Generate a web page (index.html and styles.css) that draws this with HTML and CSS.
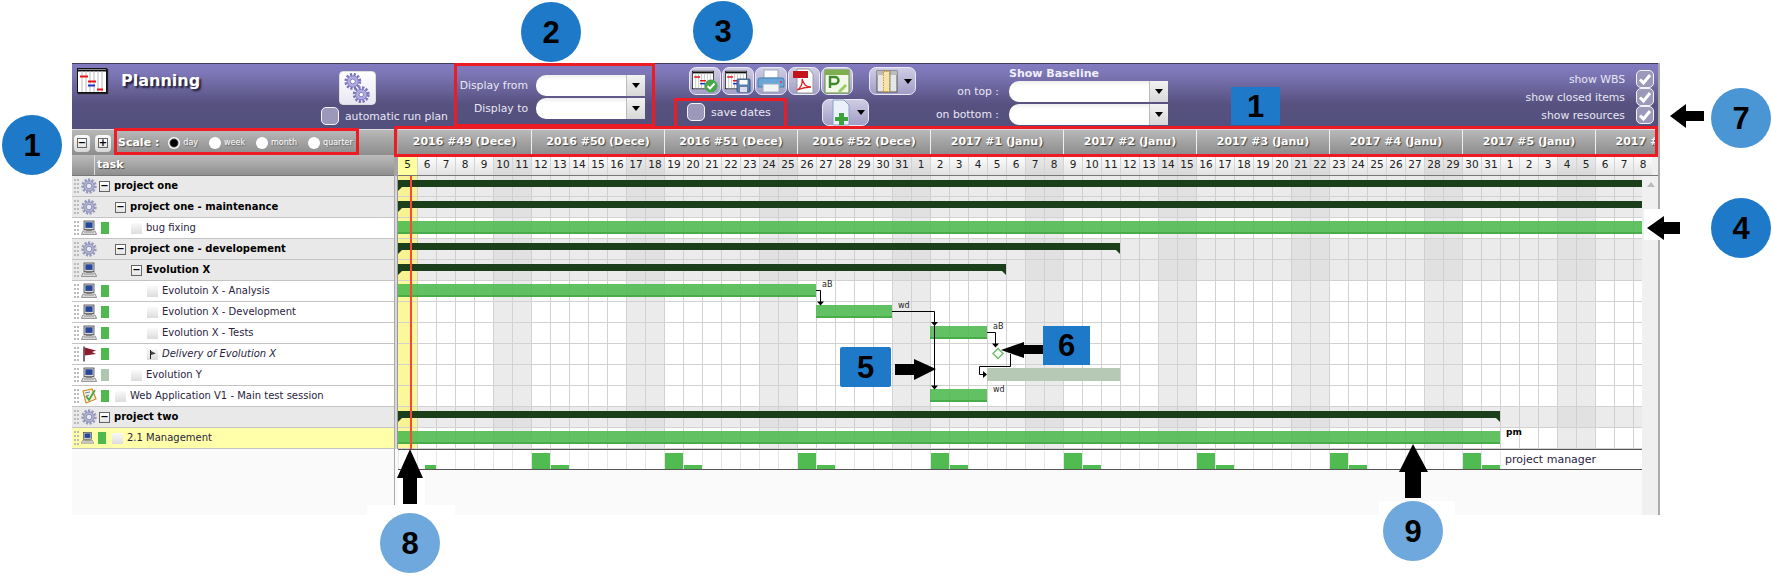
FILE: index.html
```html
<!DOCTYPE html>
<html lang="en">
<head>
<meta charset="utf-8">
<title>Planning</title>
<link rel="stylesheet" href="styles.css">
</head>
<body>
<svg class="defs" width="0" height="0" aria-hidden="true">
  <symbol id="gear" viewBox="0 0 16 16">
    <circle cx="8" cy="8" r="6.4" fill="none" stroke="#9a9dc0" stroke-width="2.6" stroke-dasharray="2.2 1.35"/>
    <circle cx="8" cy="8" r="5.2" fill="#b4b6d6" stroke="#7d80a4" stroke-width=".7"/>
    <circle cx="8" cy="8" r="2.8" fill="#e8e9f4" stroke="#7a7da2" stroke-width=".8"/>
  </symbol>
  <symbol id="pc" viewBox="0 0 16 16">
    <rect x="3" y="1" width="10" height="8.5" fill="#d8d8d8" stroke="#444" stroke-width=".8"/>
    <rect x="4.4" y="2.3" width="7.2" height="5.6" fill="#26479b"/>
    <rect x="5" y="9.5" width="6" height="1.4" fill="#888"/>
    <path d="M2 11h12l1.6 3.4H.4z" fill="#e6e6e6" stroke="#666" stroke-width=".7"/>
    <path d="M3 12.6h10" stroke="#999" stroke-width=".7"/>
  </symbol>
  <symbol id="flag" viewBox="0 0 16 16">
    <path d="M3 .5V15.5" stroke="#111" stroke-width="1.2"/>
    <path d="M3.6 1.5 15 4.5 11 6 15 8 3.6 9.5z" fill="#8e1b2c"/>
  </symbol>
  <symbol id="test" viewBox="0 0 16 16">
    <path d="M2 3 11 1l4 10-10 4z" fill="#f6f1df" stroke="#d98a2b" stroke-width="1.2"/>
    <path d="M4 5l5-1M5 8l3-.7" stroke="#3c6cb4" stroke-width=".8"/>
    <path d="M5 8l3 4 6-10" fill="none" stroke="#45a54a" stroke-width="1.8"/>
  </symbol>
  <symbol id="gantt" viewBox="0 0 30 25">
    <rect x=".5" y=".5" width="29" height="24" fill="#fff" stroke="#111"/>
    <path d="M1 2.5h28" stroke="#111" stroke-width="2"/>
    <path d="M5 3v21M9 3v21M13 3v21M17 3v21M21 3v21M25 3v21" stroke="#bbb"/>
    <path d="M3 8.5h8M11 13.500h8M20 21.500h6" stroke="#e8141c" stroke-width="2"/>
    <path d="M11 17.500h7" stroke="#2233cc" stroke-width="2"/>
  </symbol>
  <symbol id="tick" viewBox="0 0 16 16">
    <path d="M3 8.500l3.500 3.500L13 4" fill="none" stroke="#fff" stroke-width="3"/>
  </symbol>
</svg>

<div class="stage">
  <div class="planner">
    <header class="toolbar">
      <div class="tb-logo"><svg class="logo"><use href="#gantt"/></svg></div>
      <div class="tb-title">Planning</div>
      <div class="tb-run">
        <button class="gearbtn" type="button" aria-label="run plan">
          <svg viewBox="3 1 28 32" width="27" height="30">
            <circle cx="12" cy="10" r="7.500" fill="none" stroke="#7a73bd" stroke-width="3" stroke-dasharray="2.400 1.600"/>
            <circle cx="12" cy="10" r="6" fill="#b3aee0" stroke="#7a73bd"/>
            <circle cx="12" cy="10" r="2.600" fill="#fff" stroke="#7a73bd"/>
            <circle cx="21" cy="24" r="7.500" fill="none" stroke="#7a73bd" stroke-width="3" stroke-dasharray="2.400 1.600"/>
            <ellipse cx="21" cy="24" rx="6" ry="5.500" fill="#b3aee0" stroke="#7a73bd"/>
            <circle cx="21" cy="24" r="2.400" fill="#fff" stroke="#7a73bd"/>
          </svg>
        </button>
        <label class="check-row"><span class="check"></span><span>automatic run plan</span></label>
      </div>
      <div class="tb-display">
        <span class="tb-label">Display from</span>
        <span class="combo"><span class="combo-field"></span><span class="combo-arrow"></span></span>
        <span class="tb-label">Display to</span>
        <span class="combo"><span class="combo-field"></span><span class="combo-arrow"></span></span>
      </div>
      <div class="tb-actions">
        <div class="act-row">
          <button class="ibtn" type="button" aria-label="refresh"><svg viewBox="0 0 30 26" width="30" height="26"><use href="#gantt" width="22" height="20" x="2" y="2"/><circle cx="21" cy="18" r="6.500" fill="#46a846"/><path d="M17.500 18l2.500 2.500 4.500-5" fill="none" stroke="#fff" stroke-width="2"/></svg></button>
          <button class="ibtn" type="button" aria-label="save"><svg viewBox="0 0 30 26" width="30" height="26"><use href="#gantt" width="22" height="20" x="2" y="2"/><rect x="14" y="11" width="13" height="13" rx="1" fill="#5d7fb0" stroke="#3a5a88"/><rect x="16.500" y="12" width="8" height="4.500" fill="#fff"/><rect x="17" y="19" width="7" height="5" fill="#dde"/></svg></button>
          <button class="ibtn" type="button" aria-label="print"><svg viewBox="0 0 30 26" width="30" height="26"><rect x="8" y="2" width="14" height="8" fill="#fff" stroke="#9ab"/><path d="M4 10h22q2 0 2 2v7H2v-7q0-2 2-2z" fill="#6aa6d8" stroke="#4a7fae"/><rect x="7" y="16" width="16" height="8" fill="#f4f4f4" stroke="#9ab"/><circle cx="25" cy="14" r="1" fill="#e33"/></svg></button>
          <button class="ibtn" type="button" aria-label="pdf"><svg viewBox="0 0 30 26" width="30" height="26"><path d="M8 1h12l4 5v19H8z" fill="#fff" stroke="#999"/><rect x="4" y="3" width="15" height="7" fill="#c4141b"/><path d="M8 22c4-2 6-7 5-11 2 6 4 8 9 8-5 0-9 1-14 3z" fill="none" stroke="#d22" stroke-width="1.300"/></svg></button>
          <button class="ibtn" type="button" aria-label="project"><svg viewBox="0 0 30 26" width="30" height="26"><rect x="3" y="2" width="24" height="23" fill="#f2f7e8" stroke="#5f8f3a"/><rect x="3" y="2" width="24" height="5" fill="#7fae4e"/><path d="M8 20V9h5a3 3 0 0 1 0 7H8" fill="none" stroke="#3f8a2c" stroke-width="2.400"/><path d="M17 24l7-7" stroke="#9c6" stroke-width="3"/></svg></button>
          <button class="ibtn ibtn-menu ibtn-cols" type="button" aria-label="columns"><svg viewBox="0 0 26 26" width="26" height="26"><rect x="3" y="3" width="20" height="21" fill="#e6e6e6" stroke="#555"/><rect x="3" y="3" width="20" height="4" fill="#bbb"/><rect x="9.500" y="3.500" width="6" height="20" fill="#f5e3a8" stroke="#e0941c" stroke-dasharray="1.500 1"/><path d="M16 3v21" stroke="#888"/></svg><span class="caret"></span></button>
        </div>
        <div class="act-row act-row2">
          <label class="check-row save"><span class="check"></span><span>save dates</span></label>
          <button class="ibtn ibtn-menu ibtn-new" type="button" aria-label="new"><svg viewBox="0 0 26 27" width="26" height="27"><path d="M6 1h11l5 5v20H6z" fill="#eaf1fb" stroke="#8aa0c0"/><path d="M12 15h5v4h4v4h-4v4h-5v-4H8v-4h4z" fill="#3ca33c" transform="translate(0 -1)"/></svg><span class="caret"></span></button>
        </div>
      </div>
      <div class="tb-baseline">
        <div class="base-title">Show Baseline</div>
        <div class="base-grid">
          <span class="tb-label">on top :</span>
          <span class="combo"><span class="combo-field"></span><span class="combo-arrow"></span></span>
          <span class="tb-label">on bottom :</span>
          <span class="combo"><span class="combo-field"></span><span class="combo-arrow"></span></span>
        </div>
      </div>
      <div class="tb-options">
        <div class="opt"><span>show WBS</span><span class="check"><svg><use href="#tick"/></svg></span></div>
        <div class="opt"><span>show closed items</span><span class="check"><svg><use href="#tick"/></svg></span></div>
        <div class="opt"><span>show resources</span><span class="check"><svg><use href="#tick"/></svg></span></div>
      </div>
    </header>

    <div class="head">
      <div class="head-left">
        <div class="scale-row">
          <button class="mini" type="button"><span class="tree-box">−</span></button>
          <button class="mini mini-plus" type="button"><span class="tree-box">+</span></button>
          <span class="scale-label">Scale :</span>
          <label class="radio on"><span class="dot"></span>day</label>
          <label class="radio"><span class="dot"></span>week</label>
          <label class="radio"><span class="dot"></span>month</label>
          <label class="radio"><span class="dot"></span>quarter</label>
        </div>
        <div class="task-row"><span class="task-title">task</span></div>
      </div>
      <div class="head-split"></div>
      <div class="head-right">
        <div class="weeks">
          <span class="week">2016 #49 (Dece)</span><span class="week">2016 #50 (Dece)</span><span class="week">2016 #51 (Dece)</span><span class="week">2016 #52 (Dece)</span><span class="week">2017 #1 (Janu)</span><span class="week">2017 #2 (Janu)</span><span class="week">2017 #3 (Janu)</span><span class="week">2017 #4 (Janu)</span><span class="week">2017 #5 (Janu)</span><span class="week">2017 #6 (Febr)</span>
        </div>
        <div class="days">
          <span>5</span><span>6</span><span>7</span><span>8</span><span>9</span><span>10</span><span>11</span><span>12</span><span>13</span><span>14</span><span>15</span><span>16</span><span>17</span><span>18</span><span>19</span><span>20</span><span>21</span><span>22</span><span>23</span><span>24</span><span>25</span><span>26</span><span>27</span><span>28</span><span>29</span><span>30</span><span>31</span><span>1</span><span>2</span><span>3</span><span>4</span><span>5</span><span>6</span><span>7</span><span>8</span><span>9</span><span>10</span><span>11</span><span>12</span><span>13</span><span>14</span><span>15</span><span>16</span><span>17</span><span>18</span><span>19</span><span>20</span><span>21</span><span>22</span><span>23</span><span>24</span><span>25</span><span>26</span><span>27</span><span>28</span><span>29</span><span>30</span><span>31</span><span>1</span><span>2</span><span>3</span><span>4</span><span>5</span><span>6</span><span>7</span><span>8</span>
        </div>
      </div>
    </div>

    <div class="body">
      <div class="tasks">
        <div class="trow sum"><i class="grip"></i><svg class="ico"><use href="#gear"/></svg><span class="tree-box l0">−</span><span class="name">project one</span></div>
        <div class="trow sum"><i class="grip"></i><svg class="ico"><use href="#gear"/></svg><span class="tree-box l1">−</span><span class="name">project one - maintenance</span></div>
        <div class="trow"><i class="grip"></i><svg class="ico"><use href="#pc"/></svg><i class="sq"></i><span class="leaf l2"></span><span class="name">bug fixing</span></div>
        <div class="trow sum"><i class="grip"></i><svg class="ico"><use href="#gear"/></svg><span class="tree-box l1">−</span><span class="name">project one - developement</span></div>
        <div class="trow sum"><i class="grip"></i><svg class="ico"><use href="#pc"/></svg><span class="tree-box l2">−</span><span class="name">Evolution X</span></div>
        <div class="trow"><i class="grip"></i><svg class="ico"><use href="#pc"/></svg><i class="sq"></i><span class="leaf l3"></span><span class="name">Evolutoin X - Analysis</span></div>
        <div class="trow"><i class="grip"></i><svg class="ico"><use href="#pc"/></svg><i class="sq"></i><span class="leaf l3"></span><span class="name">Evolution X - Development</span></div>
        <div class="trow"><i class="grip"></i><svg class="ico"><use href="#pc"/></svg><i class="sq"></i><span class="leaf l3"></span><span class="name">Evolution X - Tests</span></div>
        <div class="trow mile"><i class="grip"></i><svg class="ico"><use href="#flag"/></svg><i class="sq"></i><span class="leaf l3 leaf-flag"><svg viewBox="0 0 11 11"><path d="M3.500 1v9" stroke="#222"/><path d="M4 2l5 2.500L4 6z" fill="#444"/></svg></span><span class="name">Delivery of Evolution X</span></div>
        <div class="trow"><i class="grip"></i><svg class="ico"><use href="#pc"/></svg><i class="sq sq-pale"></i><span class="leaf l2"></span><span class="name">Evolution Y</span></div>
        <div class="trow"><i class="grip"></i><svg class="ico"><use href="#test"/></svg><i class="sq"></i><span class="leaf l1"></span><span class="name">Web Application V1 - Main test session</span></div>
        <div class="trow sum"><i class="grip"></i><svg class="ico"><use href="#gear"/></svg><span class="tree-box l0">−</span><span class="name">project two</span></div>
        <div class="trow sel"><i class="grip"></i><svg class="ico"><use href="#pc"/></svg><i class="sq"></i><span class="leaf"></span><span class="name">2.1 Management</span></div>
      </div>
      <div class="splitter"><i></i></div>
      <div class="chart">
        <div class="grows">
          <div class="grow gsum"><b class="sumbar" style="left:0;width:1300px"></b></div>
          <div class="grow gsum"><b class="sumbar" style="left:0;width:1300px"></b></div>
          <div class="grow"><b class="bar" style="left:0;width:1300px"></b></div>
          <div class="grow gsum"><b class="sumbar" style="left:0;width:722px"></b></div>
          <div class="grow gsum"><b class="sumbar" style="left:0;width:608px"></b></div>
          <div class="grow"><b class="bar" style="left:0;width:418px"></b><span class="lbl" style="left:424px">aB</span></div>
          <div class="grow"><b class="bar" style="left:418px;width:76px"></b><span class="lbl" style="left:500px">wd</span></div>
          <div class="grow"><b class="bar" style="left:532px;width:57px"></b><span class="lbl" style="left:595px">aB</span></div>
          <div class="grow"></div>
          <div class="grow"><b class="bar bar-pale" style="left:589px;width:133px"></b></div>
          <div class="grow"><b class="bar" style="left:532px;width:57px"></b><span class="lbl" style="left:595px">wd</span></div>
          <div class="grow gsum"><b class="sumbar" style="left:0;width:1102px"></b></div>
          <div class="grow"><b class="bar" style="left:0;width:1102px"></b><span class="lbl lbl-b" style="left:1108px">pm</span></div>
          <svg class="links" width="1244" height="273" aria-hidden="true">
            <g fill="none" stroke="#000">
              <path d="M418 114.500h4.500V126"/>
              <path d="M494 135.500h42.500V210"/>
              <path d="M589 156.500h8.500V168"/>
              <path d="M612.500 178v12.500h-31v8h4"/>
            </g>
            <g fill="#000">
              <path d="M419 125.500h7l-3.500 4z"/>
              <path d="M533 146h7l-3.500 4z"/>
              <path d="M533 209.500h7l-3.500 4z"/>
              <path d="M594 167.500h7l-3.500 4z"/>
              <path d="M585 195l4 3.500-4 3.500z"/>
            </g>
            <path d="M600 172.500l5 5-5 5-5-5z" fill="#fff" stroke="#6cc06c" stroke-width="1.500"/>
          </svg>
          <i class="nowline"></i>
        </div>
        <div class="resource">
          <b class="rb rb-s" style="left:27px;width:11px"></b>
          <b class="rb rb-t" style="left:134px"></b><b class="rb rb-s" style="left:153px"></b>
          <b class="rb rb-t" style="left:267px"></b><b class="rb rb-s" style="left:286px"></b>
          <b class="rb rb-t" style="left:400px"></b><b class="rb rb-s" style="left:419px"></b>
          <b class="rb rb-t" style="left:533px"></b><b class="rb rb-s" style="left:552px"></b>
          <b class="rb rb-t" style="left:666px"></b><b class="rb rb-s" style="left:685px"></b>
          <b class="rb rb-t" style="left:799px"></b><b class="rb rb-s" style="left:818px"></b>
          <b class="rb rb-t" style="left:932px"></b><b class="rb rb-s" style="left:951px"></b>
          <b class="rb rb-t" style="left:1065px"></b><b class="rb rb-s" style="left:1084px"></b>
          <span class="res-name">project manager</span>
        </div>
      </div>
      <div class="scrollbar"><i></i></div>
    </div>
  </div>

  <div class="patch p-4"></div>
  <div class="patch p-8a"></div>
  <div class="patch p-8b"></div>
  <div class="patch p-9"></div>

  <div class="redbox r-scale"></div>
  <div class="redbox r-display"></div>
  <div class="redbox r-save"></div>
  <div class="redbox r-weeks"></div>

  <svg class="arrows" width="1772" height="579" aria-hidden="true">
    <polygon points="895,364 914,364 914,359 936,369 914,380 914,375 895,375"/>
    <polygon points="1001,350 1024,342 1024,345 1045,345 1045,354 1024,354 1024,358"/>
    <polygon points="1670,116 1686,104 1686,111 1704,111 1704,121 1686,121 1686,128"/>
    <polygon points="1647,228 1664,216 1664,222 1680,222 1680,234 1664,234 1664,240"/>
    <polygon points="410,449 423,478 417,478 417,504 403,504 403,478 397,478"/>
    <polygon points="1413,444 1428,472 1421,472 1421,498 1405,498 1405,472 1399,472"/>
  </svg>

  <div class="num n-1">1</div>
  <div class="num n-2">2</div>
  <div class="num n-3">3</div>
  <div class="num n-4">4</div>
  <div class="num n-7 mid">7</div>
  <div class="num n-8 pale">8</div>
  <div class="num n-9 pale">9</div>
  <div class="tag t-1">1</div>
  <div class="tag t-5">5</div>
  <div class="tag t-6">6</div>
</div>
</body>
</html>
```
FILE: styles.css
```css
* { box-sizing: border-box; }
html, body { margin: 0; padding: 0; background: #fff; }
body { font-family: "DejaVu Sans", sans-serif; }
.defs { position: absolute; }
button { padding: 0; font: inherit; cursor: default; }

.stage { position: relative; width: 1772px; height: 579px; overflow: hidden; padding: 63px 0 0 72px; }
.planner { width: 1588px; height: 452px; display: flex; flex-direction: column; border-right: 2px solid #aaa; }

/* toolbar */
.toolbar {
  height: 66px; flex: none; border-top: 1px solid #3f3c60;
  background: linear-gradient(#837bc0 0, #7d76b6 15%, #56517f 62%, #54507e 100%);
  display: grid; grid-template-columns: 49px 200px 133px 235px 241px 239px 489px;
  color: #e9e7f4; font-size: 10.8px;
}
.tb-logo { padding: 4px 0 0 5px; }
.logo { display: block; width: 30px; height: 25px; box-shadow: 1px 1px 1px #222; }
.tb-title { font-size: 16px; font-weight: bold; color: #fff; padding-top: 7px; line-height: 20px; text-shadow: 2px 2px 2px #1c1a33; }
.tb-run { padding-top: 7px; }
.gearbtn {
  display: flex; align-items: center; justify-content: center; width: 37px; height: 34px; margin: 0 0 2px 18px;
  background: linear-gradient(#fff, #e9e8f2); border: 1px solid #ddd; border-radius: 4px;
}
.check-row { display: flex; align-items: center; gap: 6px; }
.check {
  display: block; width: 18px; height: 18px; flex: none;
  background: #9c98ba; border: 1px solid #f2f2f8; border-radius: 5px;
}
.check svg { display: block; width: 16px; height: 16px; }
.tb-label { text-align: right; }
.tb-display { display: grid; grid-template-columns: 74px 109px; column-gap: 8px; row-gap: 2px; padding-top: 11px; align-content: start; align-items: center; }
.combo { display: flex; height: 21px; width: 100%; }
.combo-field { flex: 1; background: linear-gradient(#eee, #fff 25%, #fff); border-radius: 10px 0 0 10px; }
.combo-arrow { position: relative; width: 19px; background: linear-gradient(#f2f2f2, #d8d8d8); border-left: 1px solid #bbb; }
.combo-arrow::after { content: ""; position: absolute; left: 5px; top: 8px; border: 4px solid transparent; border-top: 5px solid #000; border-bottom: 0; }

.tb-actions { padding-top: 3px; }
.act-row { display: flex; gap: 1px; }
.act-row2 { margin-top: 4px; }
.ibtn {
  display: flex; align-items: center; justify-content: center; width: 32px; height: 28px; flex: none;
  background: linear-gradient(#cfcce4, #a29dc6); border: 1px solid #ece9f6; border-radius: 7px;
}
.ibtn-menu { width: 47px; gap: 4px; }
.ibtn-cols { margin-left: 15px; }
.ibtn-new { height: 27px; }
.caret { border: 4px solid transparent; border-top: 5px solid #000; border-bottom: 0; }
.save { width: 132px; margin-left: -2px; margin-right: 2px; gap: 6px; font-size: 11px; padding-bottom: 1px; }
.tb-baseline { padding-top: 3px; }
.base-title { font-size: 11px; font-weight: bold; line-height: 14px; padding-left: 79px; color: #f0effa; }
.base-grid { display: grid; grid-template-columns: 69px 159px; column-gap: 10px; row-gap: 2px; align-items: center; }
.tb-options { display: flex; flex-direction: column; align-items: flex-end; padding: 6px 4px 0 0; }
.opt { display: flex; align-items: center; gap: 11px; height: 18px; }

/* header band */
.head { display: flex; height: 47px; flex: none; }
.head-left { width: 322px; border-top: 1px solid #ddd; background: #999; }
.head-split { width: 4px; background: #a5a5a5; }
.head-right { flex: 1; min-width: 0; overflow: hidden; background: #f0f0f0; }
.scale-row {
  display: flex; align-items: center; height: 25px; padding-left: 2px;
  background: linear-gradient(#b8b8b8, #8c8c8c); color: #fff;
}
.mini { display: flex; align-items: center; justify-content: center; width: 16px; height: 17px; margin-top: 1px; background: linear-gradient(#fafafa, #d8d8d8); border: 0; border-radius: 4px; }
.mini-plus { margin-left: 5px; }
.mini .tree-box { width: 10px; height: 10px; }
.tree-box {
  display: flex; align-items: center; justify-content: center; width: 11px; height: 11px; flex: none;
  border: 1px solid #666; background: linear-gradient(#fff, #e4e4e4); font-size: 10px; line-height: 1; color: #000; font-weight: bold;
}
.scale-label { font-size: 11px; font-weight: bold; margin: 0 9px 0 7px; text-shadow: 1px 1px 1px #555; }
.radio { display: flex; align-items: center; gap: 3px; font-size: 8px; margin-right: 11px; text-shadow: 1px 1px 1px #666; }
.dot { display: block; width: 12px; height: 12px; border-radius: 50%; background: #fff; }
.on .dot { background: radial-gradient(circle, #000 0 3px, #444 4px, #fff 5px); }
.task-row { height: 21px; background: linear-gradient(#bbb, #8f8f8f); border-bottom: 1px solid #777; padding-left: 22px; }
.task-title { display: block; height: 20px; line-height: 20px; padding-left: 2px; border-left: 1px solid #ddd; font-size: 11px; font-weight: bold; color: #fff; text-shadow: 1px 1px 1px #444; }

.weeks { display: flex; height: 26px; border-top: 1px solid #ddd; }
.week {
  flex: none; width: 133px; line-height: 24px; text-align: center; white-space: nowrap; font-size: 11px; font-weight: bold; color: #fff;
  background: linear-gradient(#b8b8b8, #8c8c8c); text-shadow: 1px 1px 1px #444;
}
.week + .week { border-left: 1px solid #f0f0f0; }
.days { display: flex; height: 21px; border-bottom: 1px solid #777; }
.days span {
  flex: none; width: 19px; text-align: center; line-height: 19px; font-size: 10.500px; color: #222;
  background: linear-gradient(#fff, #e2e2e2); border-left: 1px solid #d4d4d4; white-space: nowrap;
}
.days span:nth-child(7n+6), .days span:nth-child(7n+7) { background: linear-gradient(#ececec, #d8d8d8); }
.days span:first-child { background: #ffffa0; border-left: 0; }

/* body */
.body { flex: 1; display: flex; min-height: 0; background: #fafafa; }
.tasks { width: 322px; flex: none; }
.trow { display: flex; align-items: center; height: 21px; background: #fff; border-bottom: 1px solid #c4c4c4; font-size: 10px; color: #2a2440; white-space: nowrap; }
.trow.sum { background: #e9e9e9; font-weight: bold; color: #000; }
.trow.mile .name { font-style: italic; }
.trow.sel { background: #ffffaa; }
.grip { display: block; width: 6px; height: 15px; margin-left: 2px; flex: none; background: radial-gradient(circle at 1px 1px, #bbb 1px, transparent 1.200px) 0 0 / 3px 4px; }
.ico { display: block; width: 16px; height: 16px; margin-left: 1px; flex: none; }
.sq { display: block; width: 8px; height: 12px; background: #4fb84f; flex: none; margin: 0 -12px 0 4px; }
.sq-pale { background: #b0c6b0; }
.leaf { display: block; width: 11px; height: 11px; flex: none; background: linear-gradient(#fafafa, #dcdcdc); }
.leaf-flag svg { display: block; width: 11px; height: 11px; }
.l0 { margin-left: 2px; }
.l1 { margin-left: 18px; }
.l2 { margin-left: 34px; }
.l3 { margin-left: 50px; }
.name { margin-left: 4px; padding-bottom: 2px; }
.trow.sel .ico { width: 13px; }
.trow.sel .sq { margin: 0 -12px 0 4px; }
.trow.sel .leaf { margin-left: 18px; }

.splitter { position: relative; width: 4px; flex: none; border-left: 1px solid #aaa; }
.splitter i { display: block; height: 273px; margin-left: 0; background: #d8d8d8; border-right: 1px solid #999; }
.chart { width: 1244px; flex: none; overflow: hidden; }
.grows { position: relative; height: 273px; }
.grow {
  position: relative; height: 21px; background-color: #fff; border-bottom: 1px solid #d2d2d2;
  background-image:
    linear-gradient(90deg, #fbf89c 0 19px, transparent 19px),
    repeating-linear-gradient(90deg, #d2d2d2 0 1px, transparent 1px 19px),
    repeating-linear-gradient(90deg, transparent 0 95px, #ebebeb 95px 133px);
}
.grow.gsum {
  background-color: #ebebeb;
  background-image:
    linear-gradient(90deg, #f7f292 0 19px, transparent 19px),
    repeating-linear-gradient(90deg, #cfcfcf 0 1px, transparent 1px 19px),
    repeating-linear-gradient(90deg, transparent 0 95px, #e1e1e1 95px 133px);
}
.bar { position: absolute; top: 3px; height: 13px; background: rgba(76, 184, 76, .88); border-bottom: 2px solid rgba(70, 170, 70, .9); }
.bar-pale { background: #b5c9b5; border-bottom: 0; }
.sumbar { position: absolute; top: 4px; height: 7px; background: #1a3f1a; }
.sumbar::before, .sumbar::after { content: ""; position: absolute; top: 7px; border-top: 4px solid #1a3f1a; }
.sumbar::before { left: 0; border-right: 4px solid transparent; }
.sumbar::after { right: 0; border-left: 4px solid transparent; }
.lbl { position: absolute; top: -1px; font-size: 8px; line-height: 10px; color: #222; }
.lbl-b { font-size: 9px; font-weight: bold; color: #000; }
.links { position: absolute; left: 0; top: 0; }
.nowline { position: absolute; left: 12px; top: 0; bottom: 0; width: 2px; background: #ff4438; }
.resource {
  position: relative; height: 21px; border-top: 1px solid #555; border-bottom: 1px solid #555; background-color: #fff;
  background-image: repeating-linear-gradient(90deg, #e6e6e6 0 1px, transparent 1px 19px);
}
.rb { position: absolute; width: 18px; bottom: 0; background: #50bb50; }
.rb-t { height: 16px; }
.rb-s { height: 4px; }
.res-name { position: absolute; left: 1107px; right: 0; top: 0; line-height: 19px; font-size: 11px; color: #2a2440; background: #fff; white-space: nowrap; }
.scrollbar { flex: 1; background: #f0f0f0; position: relative; }
.scrollbar i { position: absolute; left: 5px; top: 6px; border: 4px solid transparent; border-bottom: 5px solid #bbb; border-top: 0; }

/* annotations laid over the screenshot */
.patch { position: absolute; background: #fff; }
.p-4 { left: 1644px; top: 209px; width: 18px; height: 31px; }
.p-8a { left: 398px; top: 470px; width: 27px; height: 35px; }
.p-8b { left: 367px; top: 505px; width: 88px; height: 10px; }
.p-9 { left: 1379px; top: 501px; width: 76px; height: 14px; }
.redbox { position: absolute; border: 3px solid #ed1c24; }
.r-scale { left: 114px; top: 128px; width: 245px; height: 27px; }
.r-display { left: 454px; top: 63px; width: 201px; height: 64px; }
.r-save { left: 674px; top: 98px; width: 113px; height: 31px; }
.r-weeks { left: 394px; top: 126px; width: 1264px; height: 31px; }
.arrows { position: absolute; left: 0; top: 0; fill: #000; }
.num, .tag {
  position: absolute; display: flex; align-items: center; justify-content: center; background: #1e7ac8; color: #000;
  font-family: "Liberation Sans", sans-serif; font-weight: bold; font-size: 31px; line-height: 1;
}
.num { width: 60px; height: 60px; border-radius: 50%; }
.mid { background: #4a95d3; }
.pale { background: #6fa8dc; }
.n-1 { left: 2px; top: 115px; }
.n-2 { left: 521px; top: 2px; }
.n-3 { left: 693px; top: 1px; }
.n-4 { left: 1711px; top: 198px; }
.n-7 { left: 1711px; top: 88px; }
.n-8 { left: 380px; top: 513px; }
.n-9 { left: 1383px; top: 501px; }
.t-1 { left: 1231px; top: 87px; width: 49px; height: 38px; }
.t-5 { left: 840px; top: 347px; width: 51px; height: 40px; border-radius: 2px; }
.t-6 { left: 1043px; top: 326px; width: 47px; height: 39px; }
```
